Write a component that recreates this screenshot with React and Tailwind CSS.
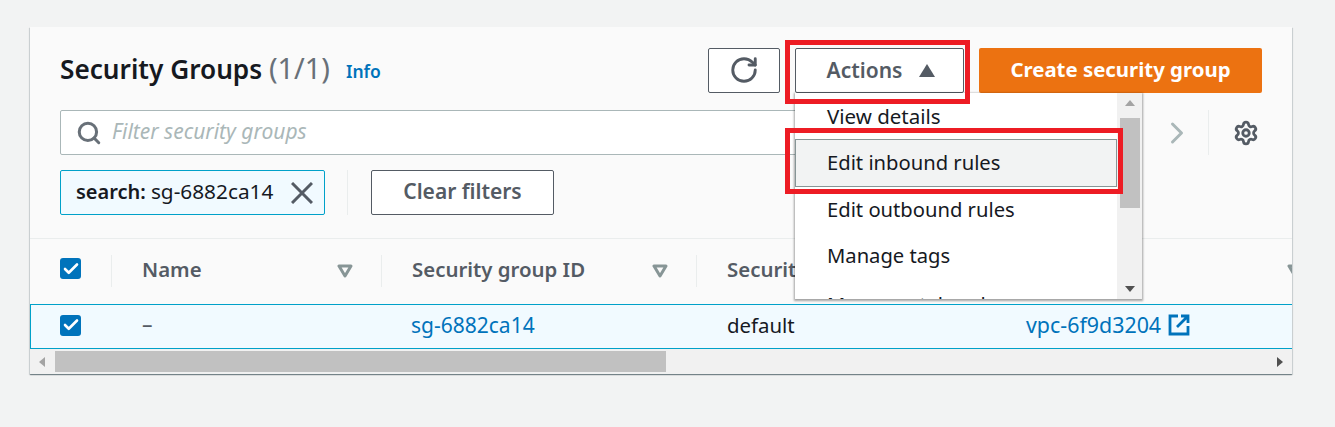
import React from 'react';
import { Search, RotateCw, Settings, ChevronRight, Check } from 'lucide-react';

function Checkbox({ className = '' }) {
  return (
    <span className={`flex h-[21px] w-[21px] items-center justify-center rounded-[3px] bg-[#0073bb] ${className}`}>
      <Check size={18} strokeWidth={3.5} className="text-white" />
    </span>
  );
}

function SortArrow() {
  return (
    <svg width="16" height="14" viewBox="0 0 16 14" className="shrink-0">
      <path d="M2 2h12L8 12z" fill="none" stroke="#879596" strokeWidth="3" strokeLinejoin="round" />
    </svg>
  );
}

function HeaderCell({ label, width, arrow = true, pr = 'pr-[28px]' }) {
  return (
    <div className={`flex h-[32px] shrink-0 items-center justify-between border-r border-[#eaeded] pl-[30px] ${pr} ${width}`}>
      <span className="whitespace-nowrap pb-[2px] text-[20.4px] font-semibold text-[#545b64]">{label}</span>
      {arrow && <SortArrow />}
    </div>
  );
}

function Triangle({ dir }) {
  const paths = {
    up: 'M0 6L5 0l5 6z',
    down: 'M0 0l5 6 5-6z',
    left: 'M6 0L0 5l6 5z',
    right: 'M0 0l6 5-6 5z',
  };
  const vertical = dir === 'up' || dir === 'down';
  return (
    <svg width={vertical ? 10 : 6} height={vertical ? 6 : 10} viewBox={vertical ? '0 0 10 6' : '0 0 6 10'}>
      <path d={paths[dir]} fill={dir === 'up' || dir === 'left' ? '#a3a3a3' : '#505050'} />
    </svg>
  );
}

function MenuItem({ label, pad = 'pb-[2px]' }) {
  return (
    <div className={`flex h-[46px] shrink-0 items-center whitespace-nowrap pl-[32px] text-[20.2px] text-[#16191f] ${pad}`}>
      {label}
    </div>
  );
}

function ActionsMenu() {
  return (
    <div className="absolute left-[765px] top-[66px] z-10 flex h-[206px] w-[347px] overflow-hidden bg-white shadow-[0_1px_2px_1px_rgba(0,0,0,0.35)]">
      <div className="flex w-[322px] flex-col">
        <div className="flex h-[46px] shrink-0 items-center whitespace-nowrap pl-[32px] text-[20.5px] text-[#16191f]">View details</div>
        <div className="flex h-[48px] shrink-0 items-center whitespace-nowrap border border-[#879596] bg-[#f2f3f3] pb-[2px] pl-[31px] text-[20.2px] text-[#16191f]">
          Edit inbound rules
        </div>
        <MenuItem label="Edit outbound rules" />
        <MenuItem label="Manage tags" />
        <MenuItem label="Manage stale rules" pad="pt-[5px]" />
      </div>
      <div className="flex w-[25px] flex-col items-center justify-between bg-[#f1f1f1] py-[7px]">
        <Triangle dir="up" />
        <div className="absolute right-[2px] top-[25px] h-[90px] w-[20px] bg-[#c1c1c1]" />
        <Triangle dir="down" />
      </div>
    </div>
  );
}

export default function App() {
  return (
    <div className="h-[427px] w-[1335px] overflow-hidden bg-[#f2f3f3] pl-[30px] pt-[27px] font-['Noto_Sans',sans-serif]">
      <div className="relative w-[1262px] bg-[#fafafa] shadow-[0_1px_1px_0_rgba(0,28,36,0.4),1px_1px_1px_0_rgba(0,28,36,0.1),-1px_1px_1px_0_rgba(0,28,36,0.1)]">
        <div className="border-b border-[#eaeded] px-[30px] pb-[23px] pt-[21px]">
          {/* title row */}
          <div className="flex h-[44px] items-center">
            <h1 className="whitespace-nowrap pb-[4px] text-[26.2px] font-semibold text-[#16191f]">
              Security Groups <span className="text-[28.8px] font-normal text-[#687078]">(1/1)</span>
            </h1>
            <a className="ml-[16px] mt-[3px] text-[17.5px] font-semibold text-[#0073bb]">Info</a>
            <div className="ml-auto flex items-center">
              <button className="flex h-[45px] w-[72px] items-center justify-center rounded-[2px] border border-[#545b64] bg-white text-[#545b64]">
                <RotateCw size={30} strokeWidth={2.3} />
              </button>
              <button className="ml-[15px] flex h-[45px] w-[169px] items-center justify-center gap-[17px] rounded-[2px] border border-[#545b64] bg-white pl-[3px] text-[21px] font-semibold text-[#545b64]">
                <span className="pt-[1px]">Actions</span>
                <svg width="16" height="13" viewBox="0 0 16 13"><path d="M8 0l8 13H0z" fill="#545b64" /></svg>
              </button>
              <button className="ml-[15px] h-[45px] w-[283px] whitespace-nowrap rounded-[2px] bg-[#ec7211] pb-[2px] text-[20.4px] font-bold text-white">
                Create security group
              </button>
            </div>
          </div>
          {/* filter row */}
          <div className="mt-[18px] flex h-[45px] items-center">
            <div className="flex h-full w-[1000px] items-center rounded-[2px] border border-[#aab7b8] bg-white pl-[15px]">
              <Search size={26} strokeWidth={2.8} className="text-[#687078]" />
              <span className="ml-[10px] pb-[2px] text-[21px] italic text-[#aab7b8]">Filter security groups</span>
            </div>
            <ChevronRight size={36} strokeWidth={2} className="ml-[99px] text-[#aab7b8]" />
            <div className="ml-[13px] h-[45px] w-px bg-[#eaeded]" />
            <Settings size={26} strokeWidth={2.6} className="ml-[24px] text-[#545b64]" />
          </div>
          {/* token row */}
          <div className="mt-[15px] flex h-[45px] items-center">
            <div className="flex h-full w-[265px] items-center rounded-[2px] border border-[#00a1c9] bg-[#f1faff] pl-[15px] text-[#16191f]">
              <span className="pb-[2px] text-[20px] font-semibold">search:</span>
              <span className="ml-[5px] pb-[2px] text-[20.8px]">sg-6882ca14</span>
              <svg width="22" height="22" viewBox="0 0 22 22" className="ml-[18px]" fill="none" stroke="#545b64" strokeWidth="3">
                <path d="M1 1l20 20M21 1L1 21" />
              </svg>
            </div>
            <div className="ml-[22px] h-[45px] w-px bg-[#eaeded]" />
            <button className="ml-[23px] h-[45px] w-[183px] rounded-[2px] border border-[#545b64] bg-white pb-[2px] text-[21px] font-semibold text-[#545b64]">
              Clear filters
            </button>
          </div>
        </div>
        {/* table */}
        <div className="overflow-hidden">
          <div className="flex h-[65px] items-center pb-[2px]">
            <div className="flex h-[32px] w-[82px] shrink-0 items-center border-r border-[#eaeded] pl-[30px]">
              <Checkbox className="-mt-[4px]" />
            </div>
            <HeaderCell label="Name" width="w-[270px]" />
            <HeaderCell label="Security group ID" width="w-[315px]" />
            <HeaderCell label="Security group name" width="w-[300px]" arrow={false} />
            <HeaderCell label="VPC ID" width="w-[310px]" pr="pr-[3px]" />
          </div>
          <div className="flex h-[45px] items-center border-y border-l border-[#00a1c9] bg-[#f1faff] pb-[3px] text-[21px]">
            <div className="flex w-[81px] shrink-0 items-center pl-[29px]">
              <Checkbox />
            </div>
            <div className="w-[269px] shrink-0 pl-[30px] text-[#545b64]">–</div>
            <a className="w-[346px] shrink-0 pl-[30px] pt-[2px] text-[#0073bb]">sg-6882ca14</a>
            <div className="w-[299px] shrink-0 text-[20.4px] text-[#16191f]">default</div>
            <a className="flex items-center gap-[7px] whitespace-nowrap text-[21.4px] text-[#0073bb]">
              vpc-6f9d3204
              <svg width="22" height="22" viewBox="0 0 22 22" fill="none" stroke="#0073bb" strokeWidth="2.8">
                <path d="M10 2H2v18h18v-8" />
                <path d="M13 2h7v7M20 2L9 13" />
              </svg>
            </a>
          </div>
          {/* horizontal scrollbar */}
          <div className="flex h-[25px] items-center bg-[#f1f1f1] pl-[9px] pr-[9px]">
            <Triangle dir="left" />
            <div className="ml-[10px] h-[21px] w-[611px] bg-[#c1c1c1]" />
            <div className="ml-auto"><Triangle dir="right" /></div>
          </div>
        </div>
        <ActionsMenu />
        {/* red annotation boxes */}
        <div className="pointer-events-none absolute left-[755px] top-[13px] z-20 h-[64px] w-[185px] border-[5px] border-[#ed1c24]" />
        <div className="pointer-events-none absolute left-[755px] top-[101px] z-20 h-[66px] w-[338px] border-[5px] border-[#ed1c24]" />
      </div>
    </div>
  );
}
